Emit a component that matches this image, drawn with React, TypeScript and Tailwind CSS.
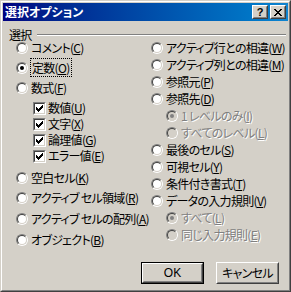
import React from 'react';

const FACE = 'bg-[#d4d0c8]';

// mnemonic label: "コメント" + "(C)" with C underlined
const Label = ({ text, k, focus }: { text: string; k: string; focus?: boolean }) => (
  <span className={focus ? 'outline outline-1 outline-dotted outline-black px-[1px]' : ''}>
    {text}(<span className="underline underline-offset-1">{k}</span>)
  </span>
);

const Radio = ({ checked, disabled }: { checked?: boolean; disabled?: boolean }) => (
  <span className="block w-3 h-3 shrink-0 rounded-full border border-t-[#808080] border-l-[#808080] border-b-white border-r-white">
    <span
      className={`flex items-center justify-center w-full h-full rounded-full border border-t-[#404040] border-l-[#404040] border-b-[#d4d0c8] border-r-[#d4d0c8] ${
        disabled ? 'bg-[#d4d0c8]' : 'bg-white'
      }`}
    >
      {checked && <span className={`block w-1 h-1 rounded-full ${disabled ? 'bg-[#808080]' : 'bg-black'}`} />}
    </span>
  </span>
);

const Check = () => (
  <span className="flex items-center justify-center w-[13px] h-[13px] shrink-0 border border-t-[#808080] border-l-[#808080] border-b-white border-r-white">
    <span className="flex items-center justify-center w-full h-full bg-white border border-t-[#404040] border-l-[#404040] border-b-[#d4d0c8] border-r-[#d4d0c8]">
      <svg width="7" height="7" viewBox="0 0 7 7" shapeRendering="crispEdges">
        <path d="M0 2h1v3H0zM1 3h1v3H1zM2 4h1v3H2zM3 3h1v3H3zM4 2h1v3H4zM5 1h1v3H5zM6 0h1v3H6z" fill="#000" />
      </svg>
    </span>
  </span>
);

type Item = { text: string; k: string; kind: 'radio' | 'check'; checked?: boolean; disabled?: boolean; focus?: boolean; mt: string; indent?: boolean };

const left: Item[] = [
  { text: 'コメント', k: 'C', kind: 'radio', mt: 'mt-0' },
  { text: '定数', k: 'O', kind: 'radio', checked: true, focus: true, mt: 'mt-[4px]' },
  { text: '数式', k: 'F', kind: 'radio', mt: 'mt-[4px]' },
  { text: '数値', k: 'U', kind: 'check', mt: 'mt-[4px]', indent: true },
  { text: '文字', k: 'X', kind: 'check', mt: 'mt-0', indent: true },
  { text: '論理値', k: 'G', kind: 'check', mt: 'mt-0', indent: true },
  { text: 'エラー値', k: 'E', kind: 'check', mt: 'mt-0', indent: true },
  { text: '空白セル', k: 'K', kind: 'radio', mt: 'mt-[6px]' },
  { text: 'アクティブ セル領域', k: 'R', kind: 'radio', mt: 'mt-[4px]' },
  { text: 'アクティブ セルの配列', k: 'A', kind: 'radio', mt: 'mt-[5px]' },
  { text: 'オブジェクト', k: 'B', kind: 'radio', mt: 'mt-[5px]' },
];

const right: Item[] = [
  { text: 'アクティブ行との相違', k: 'W', kind: 'radio', mt: 'mt-0' },
  { text: 'アクティブ列との相違', k: 'M', kind: 'radio', mt: 'mt-[1px]' },
  { text: '参照元', k: 'P', kind: 'radio', mt: 'mt-[1px]' },
  { text: '参照先', k: 'D', kind: 'radio', mt: 'mt-[1px]' },
  { text: '1 レベルのみ', k: 'I', kind: 'radio', checked: true, disabled: true, indent: true, mt: 'mt-[1px]' },
  { text: 'すべてのレベル', k: 'L', kind: 'radio', disabled: true, indent: true, mt: 'mt-[1px]' },
  { text: '最後のセル', k: 'S', kind: 'radio', mt: 'mt-[1px]' },
  { text: '可視セル', k: 'Y', kind: 'radio', mt: 'mt-[1px]' },
  { text: '条件付き書式', k: 'T', kind: 'radio', mt: 'mt-[1px]' },
  { text: 'データの入力規則', k: 'V', kind: 'radio', mt: 'mt-[1px]' },
  { text: 'すべて', k: 'L', kind: 'radio', checked: true, disabled: true, indent: true, mt: 'mt-[1px]' },
  { text: '同じ入力規則', k: 'E', kind: 'radio', disabled: true, indent: true, mt: 'mt-[1px]' },
];

const Row = ({ item }: { item: Item }) => (
  <div className={`flex items-center h-4 ${item.mt} ${item.indent ? (item.kind === 'check' ? 'pl-[17px]' : 'pl-[15px]') : ''}`}>
    {item.kind === 'radio' ? <Radio checked={item.checked} disabled={item.disabled} /> : <Check />}
    <span
      className={`${item.kind === 'check' ? 'ml-[2px]' : 'ml-[3px]'} whitespace-nowrap ${
        item.disabled ? 'text-[#808080] [text-shadow:1px_1px_0_#fff]' : 'text-black'
      }`}
    >
      <Label text={item.text} k={item.k} focus={item.focus} />
    </span>
  </div>
);

const Btn = ({ children, def }: { children: React.ReactNode; def?: boolean }) => (
  <div className={`w-[63px] h-[22px] ${def ? 'border border-black' : ''}`}>
    <div className="w-full h-full border border-t-white border-l-white border-b-[#404040] border-r-[#404040]">
      <div className="flex items-center justify-center w-full h-full border border-t-[#d4d0c8] border-l-[#d4d0c8] border-b-[#808080] border-r-[#808080]">
        {children}
      </div>
    </div>
  </div>
);

const TitleBtn = ({ children }: { children: React.ReactNode }) => (
  <div className="w-4 h-[14px] border border-t-white border-l-white border-b-[#404040] border-r-[#404040] bg-[#d4d0c8]">
    <div className="flex items-center justify-center w-full h-full border border-t-[#d4d0c8] border-l-[#d4d0c8] border-b-[#808080] border-r-[#808080]">
      {children}
    </div>
  </div>
);

export default function App() {
  return (
    <div
      className={`w-[291px] h-[292px] ${FACE} border border-t-[#d4d0c8] border-l-[#d4d0c8] border-b-[#404040] border-r-[#404040] font-['Noto_Sans_CJK_JP',sans-serif] [font-feature-settings:'palt'] text-[12px] tracking-[-0.7px] leading-none text-black`}
    >
      <div className="flex flex-col w-full h-full border border-t-white border-l-white border-b-[#808080] border-r-[#808080] p-[1px]">
        {/* title bar */}
        <div className="flex items-center h-[18px] bg-gradient-to-r from-[#000080] to-[#1084d0] pl-[2px] pr-[2px]">
          <span className="text-white font-bold text-[12px] tracking-normal">選択オプション</span>
          <div className="ml-auto flex gap-[2px]">
            <TitleBtn>
              <span className="text-[11px] font-bold leading-none tracking-normal font-['Liberation_Sans',sans-serif]">?</span>
            </TitleBtn>
            <TitleBtn>
              <svg width="8" height="7" viewBox="0 0 8 7" shapeRendering="crispEdges">
                <path d="M0 0h2v1H0zM6 0h2v1H6zM1 1h2v1H1zM5 1h2v1H5zM2 2h4v1H2zM3 3h2v1H3zM2 4h4v1H2zM1 5h2v1H1zM5 5h2v1H5zM0 6h2v1H0zM6 6h2v1H6z" fill="#000" />
              </svg>
            </TitleBtn>
          </div>
        </div>

        {/* group header */}
        <div className="flex items-center h-3 mt-[8px] pl-[6px] pr-[2px]">
          <span>選択</span>
          <div className="flex-1 ml-[5px] border-t border-t-[#808080] border-b border-b-white" />
        </div>

        {/* options */}
        <div className="flex pl-[13px] mt-[-1px]">
          <div className="w-[135px] flex flex-col">
            {left.map((it) => (
              <Row key={it.text} item={it} />
            ))}
          </div>
          <div className="flex flex-col">
            {right.map((it) => (
              <Row key={it.text} item={it} />
            ))}
          </div>
        </div>

        {/* buttons */}
        <div className="mt-auto flex justify-end gap-3 pr-[9px] pb-[5px]">
          <Btn def>
            <span className="font-['Liberation_Sans',sans-serif] text-[12px] tracking-normal">OK</span>
          </Btn>
          <Btn>キャンセル</Btn>
        </div>
      </div>
    </div>
  );
}
